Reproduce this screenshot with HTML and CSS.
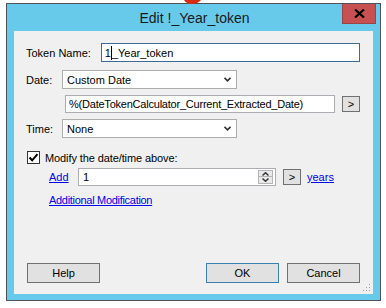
FILE: index.html
```html
<!DOCTYPE html>
<html>
<head>
    <title>Edit !_Year_token</title>
    <link rel="stylesheet" href="styles.css">
</head>
<body>

<div class="pin"></div>

<div class="window">
    <div class="titlebar">
        <span></span>
        <span class="title">Edit !_Year_token</span>
        <span class="close">
            <svg width="11" height="9" viewBox="0 0 11 9"><path d="M1 0.5 L10 8.5 M10 0.5 L1 8.5" stroke="#000" stroke-width="2.2"/></svg>
        </span>
    </div>

    <div class="client">
        <div class="row row-name">
            <label class="lbl lbl-wide">Token Name:</label>
            <div class="box box-focus box-name">1<span class="caret"></span>_Year_token</div>
        </div>

        <div class="row row-date">
            <label class="lbl">Date:</label>
            <div class="combo"><span>Custom Date</span>
                <svg width="7" height="5" viewBox="0 0 7 5"><path d="M0.5 0.8 L3.5 3.8 L6.5 0.8" fill="none" stroke="#333" stroke-width="1.6"/></svg>
            </div>
        </div>

        <div class="row row-expr">
            <div class="box box-expr">%(DateTokenCalculator_Current_Extracted_Date)</div>
            <span class="btn btn-small">&gt;</span>
        </div>

        <div class="row row-time">
            <label class="lbl">Time:</label>
            <div class="combo"><span>None</span>
                <svg width="7" height="5" viewBox="0 0 7 5"><path d="M0.5 0.8 L3.5 3.8 L6.5 0.8" fill="none" stroke="#333" stroke-width="1.6"/></svg>
            </div>
        </div>

        <div class="row row-check">
            <span class="check">
                <svg width="11" height="11" viewBox="0 0 11 11"><path d="M1.5 5.5 L4.2 8.3 L9.5 2.2" fill="none" stroke="#000" stroke-width="2"/></svg>
            </span>
            <label>Modify the date/time above:</label>
        </div>

        <div class="row row-add">
            <a href="javascript:;" class="link">Add</a>
            <div class="box box-num">
                <span>1</span>
                <span class="spin">
                    <span class="spin-btn"><svg width="7" height="4" viewBox="0 0 7 4"><path d="M0.5 3.5 L3.5 0.7 L6.5 3.5" fill="none" stroke="#333" stroke-width="1.4"/></svg></span>
                    <span class="spin-btn"><svg width="7" height="4" viewBox="0 0 7 4"><path d="M0.5 0.5 L3.5 3.3 L6.5 0.5" fill="none" stroke="#333" stroke-width="1.4"/></svg></span>
                </span>
            </div>
            <span class="btn btn-small">&gt;</span>
            <a href="javascript:;" class="link link-years">years</a>
        </div>

        <div class="row row-more">
            <a href="javascript:;" class="link">Additional Modification</a>
        </div>

        <div class="actions">
            <span class="btn btn-wide">Help</span>
            <span class="gap"></span>
            <span class="btn btn-wide btn-default">OK</span>
            <span class="btn btn-wide">Cancel</span>
        </div>

        <svg class="grip" width="8" height="8" viewBox="0 0 8 8">
            <rect x="6" y="0" width="1" height="1" fill="#a0a0a0"/>
            <rect x="3" y="3" width="1" height="1" fill="#a0a0a0"/>
            <rect x="6" y="3" width="1" height="1" fill="#a0a0a0"/>
            <rect x="0" y="6" width="1" height="1" fill="#a0a0a0"/>
            <rect x="3" y="6" width="1" height="1" fill="#a0a0a0"/>
            <rect x="6" y="6" width="1" height="1" fill="#a0a0a0"/>
        </svg>
    </div>
</div>

</body>
</html>
```

FILE: styles.css
```css
body{ margin: 0;background: #FFF;font-family: "Liberation Sans", Arial, sans-serif;font-size: 11px;color: #000;}

.pin{ position: absolute;left: 183px;top: -6px;width: 20px;height: 10px;border-radius: 0 0 10px 8px;background: #D92A12;}

.window{ margin: 3px 0 0 6px;width: 373px;height: 296px;border: solid 1px #4C5257;background: #68CAEA;display: flex;flex-direction: column;}

.titlebar{ height: 27px;display: grid;grid-template-columns: 1fr auto 1fr;align-items: start;}
.titlebar .title{ font-size: 14px;line-height: 28px;color: #1A1A1A;padding-left: 2px;}
.titlebar .close{ justify-self: end;margin-right: 4px;width: 32px;height: 19px;background: #C75050;border: solid 1px #9A4444;border-top: 0;display: flex;align-items: center;justify-content: center;}

.client{ position: relative;margin: 0 7px 6px 7px;flex: 1;background: #F0F0F0;padding: 0 13px 11px 12px;display: flex;flex-direction: column;}

.row{ display: flex;align-items: center;}
.row-name{ margin-top: 12px;}
.row-date{ margin-top: 8px;}
.row-expr{ margin-top: 6px;padding-left: 39px;}
.row-time{ margin-top: 6px;}
.row-check{ margin-top: 13px;padding-left: 1px;letter-spacing: -0.1px;}
.row-add{ margin-top: 4px;padding-left: 23px;}
.row-more{ margin-top: 7px;padding-left: 23px;line-height: 14px;letter-spacing: -0.3px;}

.lbl{ width: 36px;}
.lbl-wide{ width: 75px;}

.box{ box-sizing: border-box;background: #FFF;border: solid 1px #ABADB3;display: flex;align-items: center;padding-left: 3px;white-space: nowrap;}
.box-focus{ border-color: #3E6B95;}
.box-name{ width: 260px;height: 19px;}
.caret{ width: 1px;height: 14px;background: #000;}
.box-expr{ width: 270px;height: 18px;letter-spacing: -0.22px;}
.box-num{ width: 198px;height: 18px;justify-content: space-between;padding-right: 2px;padding-left: 4px;}

.combo{ box-sizing: border-box;width: 175px;height: 19px;background: #FFF;border: solid 1px #ACACAC;display: flex;align-items: center;justify-content: space-between;padding: 0 5px 0 4px;}

.spin{ display: flex;flex-direction: column;gap: 0;}
.spin-btn{ box-sizing: border-box;width: 15px;height: 7px;border: solid 1px #B5B5B5;background: #EAEAEA;display: flex;align-items: center;justify-content: center;}
.spin-btn + .spin-btn{ border-top: 0;}

.check{ box-sizing: border-box;width: 13px;height: 13px;border: solid 1px #333;background: #FFF;display: flex;align-items: center;justify-content: center;margin-right: 5px;}

.link{ color: #0000EE;text-decoration: underline;}
.row-add .link{ width: 29px;}
.link-years{ margin-left: 6px;}

.btn{ box-sizing: border-box;background: #E1E1E1;border: solid 1px #707070;display: flex;align-items: center;justify-content: center;}
.btn-small{ width: 18px;height: 16px;margin-left: 7px;}
.btn-wide{ width: 73px;height: 20px;}
.btn-default{ border-color: #3C7FB1;}

.actions{ margin-top: auto;display: flex;padding-left: 1px;gap: 8px;}
.actions .gap{ flex: 1;}

.grip{ position: absolute;right: 2px;bottom: 2px;}
```
